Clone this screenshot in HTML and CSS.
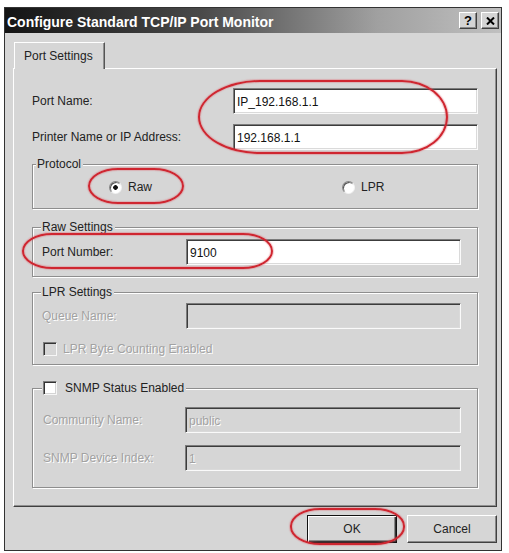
FILE: index.html
```html
<!DOCTYPE html>
<html lang="en">
<head>
    <meta charset="UTF-8">
    <meta name="viewport" content="width=device-width, initial-scale=1.0">
    <title>Configure Standard TCP/IP Port Monitor</title>
    <link rel="stylesheet" href="styles.css">
</head>
<body>

    <div class="window">
        <div class="titlebar">
            <span class="title">Configure Standard TCP/IP Port Monitor</span>
            <div class="caption-buttons">
                <span class="cap-btn">?</span>
                <span class="cap-btn">
                    <svg width="9" height="8" viewBox="0 0 9 8"><path d="M1 0.5 L8 7.5 M8 0.5 L1 7.5" stroke="#000" stroke-width="2"/></svg>
                </span>
            </div>
        </div>

        <div class="dialog">
            <div class="tabs">
                <div class="tab">Port Settings</div>
            </div>

            <div class="panel">
                <!-- Port name / address -->
                <div class="row">
                    <label for="portName">Port Name:</label>
                    <input class="field" id="portName" type="text" value="IP_192.168.1.1">
                </div>
                <div class="row gap">
                    <label for="address">Printer Name or IP Address:</label>
                    <input class="field" id="address" type="text" value="192.168.1.1">
                </div>

                <!-- Protocol -->
                <div class="group protocol">
                    <div class="group-title">Protocol</div>
                    <div class="radios">
                        <span class="option"><span class="radio checked"></span>Raw</span>
                        <span class="option"><span class="radio"></span>LPR</span>
                    </div>
                </div>

                <!-- Raw settings -->
                <div class="group raw">
                    <div class="group-title">Raw Settings</div>
                    <div class="grow raw-row">
                        <label for="portNumber">Port Number:</label>
                        <input class="field" id="portNumber" type="text" value="9100">
                    </div>
                </div>

                <!-- LPR settings (disabled while Raw is picked) -->
                <div class="group lpr">
                    <div class="group-title">LPR Settings</div>
                    <div class="grow lpr-row">
                        <label class="off">Queue Name:</label>
                        <input class="field off" type="text" value="" disabled>
                    </div>
                    <div class="check-row off">
                        <span class="checkbox grey"></span>LPR Byte Counting Enabled
                    </div>
                </div>

                <!-- SNMP -->
                <div class="group snmp">
                    <div class="group-title snmp-title">
                        <span class="checkbox"></span>SNMP Status Enabled
                    </div>
                    <div class="grow snmp-row">
                        <label class="off">Community Name:</label>
                        <input class="field off" type="text" value="public" disabled>
                    </div>
                    <div class="grow snmp-row second">
                        <label class="off">SNMP Device Index:</label>
                        <input class="field off" type="text" value="1" disabled>
                    </div>
                </div>
            </div>

            <div class="actions">
                <button class="btn default">OK</button>
                <button class="btn">Cancel</button>
            </div>
        </div>
    </div>

    <!-- red highlight rings drawn over the dialog -->
    <div class="mark mark-address"></div>
    <div class="mark mark-raw"></div>
    <div class="mark mark-port"></div>
    <div class="mark mark-ok"></div>

</body>
</html>
```

FILE: styles.css
```css
body {
    margin: 0;
    background: #fff;
    font-family: "Liberation Sans", Arial, sans-serif;
    font-size: 12px;
    color: #222;
}

.window {
    box-sizing: border-box;
    width: 498px;
    height: 544px;
    margin: 7px 0 0 4px;
    border: 1px solid #333;
    background: #d6d6d6;
    display: flex;
    flex-direction: column;
}

/* title bar */
.titlebar {
    height: 25px;
    flex: none;
    display: flex;
    align-items: center;
    justify-content: space-between;
    padding: 0 2px 0 2px;
    background: linear-gradient(to right, #141414, #4a4a4a 40%, #a0a0a0 75%, #c0c0c0);
}

.title {
    color: #fff;
    font-weight: bold;
    font-size: 14px;
    padding-top: 3px;
}

.caption-buttons {
    display: flex;
    gap: 4px;
}

.cap-btn {
    box-sizing: border-box;
    width: 18px;
    height: 17px;
    display: flex;
    align-items: center;
    justify-content: center;
    background: #d4d4d4;
    border: 1px solid;
    border-color: #fff #404040 #404040 #fff;
    box-shadow: inset -1px -1px 0 #888;
    font-weight: bold;
    font-size: 13px;
    color: #000;
}

/* dialog body */
.dialog {
    flex: 1;
    display: flex;
    flex-direction: column;
    padding: 9px 4px 7px 8px;
}

.tabs {
    display: flex;
    padding-left: 1px;
}

.tab {
    position: relative;
    z-index: 1;
    box-sizing: border-box;
    width: 91px;
    height: 27px;
    margin-bottom: -1px;
    padding: 6px 0 0 9px;
    background: #d6d6d6;
    border: 1px solid #fff;
    border-right: 1px solid #555;
    border-bottom: none;
    box-shadow: inset -1px 0 0 #909090;
    font-size: 12px;
}

.panel {
    flex: 1;
    box-sizing: border-box;
    padding: 19px 18px 0 18px;
    border: 1px solid;
    border-color: #fff #404040 #404040 #fff;
    box-shadow: inset -1px -1px 0 #909090;
    display: flex;
    flex-direction: column;
}

.row {
    display: grid;
    grid-template-columns: 201px 1fr;
    align-items: center;
}

.row.gap {
    margin-top: 10px;
}

.field {
    box-sizing: border-box;
    height: 26px;
    width: 100%;
    margin: 0;
    padding: 2px 3px 0;
    font: inherit;
    color: #111;
    background: #fff;
    border: 1px solid;
    border-color: #7c7c7c #fafafa #fafafa #7c7c7c;
    box-shadow: inset 1px 1px 0 #3c3c3c, inset -1px -1px 0 #dadada;
    outline: none;
}

.field.off {
    background: #d6d6d6;
    color: #a2a2a2;
    text-shadow: 1px 1px 0 #fff;
}

.off {
    color: #a2a2a2;
    text-shadow: 1px 1px 0 #fff;
}

/* group boxes */
.group {
    box-sizing: border-box;
    border: 1px solid #8e8e8e;
    box-shadow: inset 1px 1px 0 #fff, 1px 1px 0 #fff;
    padding: 0 16px 0 9px;
}

.group-title {
    display: flex;
    align-items: center;
    width: max-content;
    height: 14px;
    line-height: 14px;
    margin: -8px 0 0 -1px;
    padding: 0 2px 0 1px;
    background: #d6d6d6;
}

.protocol {
    height: 45px;
    margin-top: 14px;
    padding-left: 4px;
}

.raw {
    height: 50px;
    margin-top: 18px;
}

.lpr {
    height: 73px;
    margin-top: 15px;
}

.snmp {
    height: 100px;
    margin-top: 23px;
    padding-left: 10px;
}

.radios {
    display: grid;
    grid-template-columns: 233px auto;
    margin: 8px 0 0 72px;
    height: 16px;
    align-items: center;
}

.option {
    display: flex;
    align-items: center;
    gap: 6px;
}

.radio {
    box-sizing: border-box;
    width: 13px;
    height: 13px;
    border-radius: 50%;
    border: 1px solid;
    border-color: #858585 #f2f2f2 #f2f2f2 #858585;
    box-shadow: inset 1px 1px 0 #555;
    background: #fff;
}

.radio.checked {
    background: radial-gradient(circle, #111 0 2px, #fff 2.6px);
}

.grow {
    display: grid;
    grid-template-columns: 144px 1fr;
    align-items: center;
}

.raw-row {
    margin-top: 5px;
}

.lpr-row {
    margin-top: 4px;
}

.snmp-row {
    margin-top: 11px;
    grid-template-columns: 142px 1fr;
}

.snmp-row.second {
    margin-top: 12px;
}

.check-row {
    display: flex;
    align-items: center;
    gap: 6px;
    height: 16px;
    margin: 12px 0 0 1px;
}

.checkbox {
    box-sizing: border-box;
    flex: none;
    width: 14px;
    height: 14px;
    background: #fff;
    border: 1px solid;
    border-color: #7c7c7c #f6f6f6 #f6f6f6 #7c7c7c;
    box-shadow: inset 1px 1px 0 #333, inset -1px -1px 0 #d4d4d4;
}

.checkbox.grey {
    background: #d6d6d6;
}

.snmp-title {
    height: 16px;
    margin-top: -9px;
    gap: 8px;
    padding-left: 1px;
    color: #222;
}

/* dialog buttons */
.actions {
    display: flex;
    justify-content: flex-end;
    gap: 10px;
    margin-top: 8px;
}

.btn {
    box-sizing: border-box;
    width: 90px;
    height: 28px;
    margin: 0;
    font: inherit;
    color: #222;
    background: #d6d6d6;
    border: 1px solid;
    border-color: #fff #404040 #404040 #fff;
    box-shadow: inset -1px -1px 0 #888;
    cursor: pointer;
}

.btn.default {
    border: 1px solid #111;
    box-shadow: inset 1px 1px 0 #fff, inset -1px -1px 0 #333, inset -2px -2px 0 #888;
}

/* highlight rings */
.mark {
    position: absolute;
    box-sizing: border-box;
    border: 2.5px solid #cf2630;
    box-shadow: 0 0 1px 1px rgba(225, 90, 100, 0.35), inset 0 0 1px 1px rgba(225, 90, 100, 0.3);
}

.mark-address {
    left: 198px;
    top: 80px;
    width: 250px;
    height: 74px;
    border-radius: 62px 46px 46px 62px / 37px;
}

.mark-raw {
    left: 88px;
    top: 168px;
    width: 96px;
    height: 36px;
    border-radius: 30px / 18px;
}

.mark-port {
    left: 22px;
    top: 233px;
    width: 251px;
    height: 36px;
    border-radius: 30px / 18px;
}

.mark-ok {
    left: 290px;
    top: 508px;
    width: 115px;
    height: 37px;
    border-radius: 30px / 18px;
}
```
